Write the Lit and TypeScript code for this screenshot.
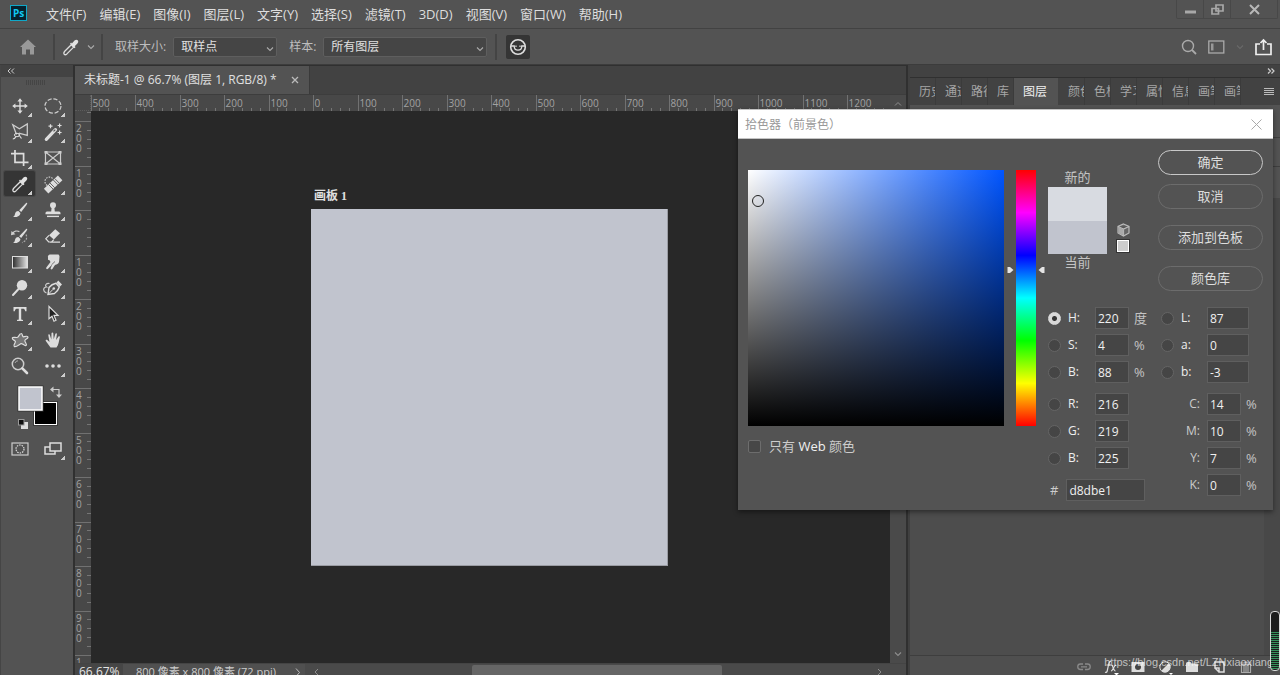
import { LitElement, html, svg, css } from "lit";
import { customElement, property } from "lit/decorators.js";
import { classMap } from "lit/directives/class-map.js";
import { styleMap } from "lit/directives/style-map.js";

const FONT = css`"Open Sans", "Noto Sans", "Noto Sans CJK SC", sans-serif`;

const reset = css`
  * { box-sizing: border-box; }
  :host { font-family: ${FONT}; font-size: 12px; line-height: 16px; color: #d6d6d6; }
  button { font: inherit; color: inherit; background: none; border: 0; padding: 0; margin: 0; }
  svg { display: block; }
`;

const chevron = svg`<path d="M1 1.5 4 4.5 7 1.5" fill="none" stroke="currentColor" stroke-width="1.1"/>`;

/* ---------- tool glyphs, drawn in a 20 x 20 box ---------- */
const dropper = svg`
  <path d="M3.2 17.3c-.8-.8-.3-2 .3-2.8l6.8-6.8 2.4 2.4-6.8 6.8c-.8.7-2 1.1-2.7.4z" fill="none" stroke="#ddd" stroke-width="1.3"/>
  <path d="M9 6.7 13.5 11.2 14.6 10.1 13.7 9.2 16.4 6.6C17.6 5.3 17.4 4 16.7 3.3 16 2.6 14.7 2.5 13.5 3.6L10.9 6.4 10.1 5.6Z" fill="#e2e2e2"/>`;
const brush = svg`
  <path d="M17 2.8C17.6 3.2 17 4.2 16.5 5L11.2 12 9.2 10.2 15.4 3.7C16 3.1 16.6 2.5 17 2.8Z" fill="#ddd"/>
  <path d="M8.4 11 10.4 12.9C10.3 15.8 7 17.5 3 17 4.8 16.2 4.6 14.8 5.2 13.2 5.8 11.7 7 10.9 8.4 11Z" fill="#ddd"/>`;

const tools: { name: string; icon: unknown; menu?: boolean; active?: boolean }[] = [
  { name: "移动工具", icon: svg`
    <path d="M10 4v12M4 10h12" stroke="#ddd" stroke-width="1.4"/>
    <path d="M10 2.2 12.6 5.4H7.4ZM10 17.8 12.6 14.6H7.4ZM2.2 10 5.4 7.4v5.2ZM17.8 10 14.6 7.4v5.2Z" fill="#ddd"/>` },
  { name: "椭圆选框工具", icon: svg`<ellipse cx="10" cy="10" rx="8" ry="7.2" fill="none" stroke="#ccc" stroke-width="1.2" stroke-dasharray="4.2 1.8"/>` },
  { name: "多边形套索工具", icon: svg`
    <path d="M6.5 12.5 2.8 2.8 9.4 6.8 17.3 2V13.4L8.8 11.2" fill="none" stroke="#ccc" stroke-width="1.3"/>
    <ellipse cx="7" cy="13" rx="2.6" ry="1.7" fill="none" stroke="#ddd"/>
    <path d="M6 14.5C5.4 15.8 4.3 17 2.8 17M8.6 12.5 11.5 16.5" fill="none" stroke="#ddd" stroke-width="1.2"/>` },
  { name: "魔棒工具", icon: svg`
    <path d="M3.3 17.3 12.5 7.7" stroke="#ddd" stroke-width="3.2" stroke-linecap="round"/>
    <path d="M10.5 9.4 12.3 7.6" stroke="#555" stroke-width="1.2"/>
    <path d="M7.5 2.2v4M5.5 4.2h4M16.6 1.5v4M14.6 3.5h4M16.6 8.5v4M14.6 10.5h4" stroke="#ddd" stroke-width="1.2"/>` },
  { name: "裁剪工具", icon: svg`<path d="M1 5.6H13.6V15M5 2V14.4H18.5M13.6 15V18" fill="none" stroke="#ddd" stroke-width="1.7"/>` },
  { name: "图框工具", menu: false, icon: svg`
    <path d="M2.5 4H17.5V16H2.5ZM2.5 4 17.5 16M17.5 4 2.5 16" fill="none" stroke="#ccc" stroke-width="1.2"/>
    <path d="M1.5 3h3v2.5h-3zM15.5 3h3v2.5h-3zM1.5 14.5h3V17h-3zM15.5 14.5h3V17h-3z" fill="#ccc"/>` },
  { name: "吸管工具", active: true, icon: dropper },
  { name: "污点修复画笔工具", icon: svg`
    <path d="M9.5 4.5C7 1.500 2 3.500 2 7.500 2 9.500 3 11 4.500 11.500" fill="none" stroke="#ccc" stroke-width="1.2" stroke-dasharray="1.5 1.2"/>
    <path d="M5.500 14.800 14.800 6" stroke="#ddd" stroke-width="6.500" stroke-linecap="square"/>
    <path d="M5.500 10.500 10.300 15.300M7 9 11.800 13.800M10.300 6 15 10.800M11.800 4.600 16.500 9.400" stroke="#555" stroke-width=".9"/>` },
  { name: "画笔工具", icon: brush },
  { name: "仿制图章工具", icon: svg`
    <circle cx="10" cy="5.3" r="3" fill="#ddd"/><path d="M8.8 6h2.4l.6 5.5H16a1.5 1.5 0 0 1 1.5 1.5v1.3h-15V13A1.5 1.5 0 0 1 4 11.5h4.2Z" fill="#ddd"/>
    <path d="M4 16.4h12" stroke="#ddd" stroke-width="1.4"/>` },
  { name: "历史记录画笔工具", icon: svg`${brush}
    <path d="M2.5 7.6C4 5.2 7 4.4 9.4 5.6" fill="none" stroke="#ccc" stroke-width="1.3"/><path d="M1 9.3 1.4 5 5.5 8.3Z" fill="#ccc"/>
    <path d="M16 8.5C17.5 12 16.5 15 12 16.6" fill="none" stroke="#aaa" stroke-width="1.2" stroke-dasharray="2 1.3"/>` },
  { name: "橡皮擦工具", icon: svg`
    <path d="M12.3 3.2 17 7.3 10.8 13.6 6 9.3Z" fill="#ddd"/>
    <path d="M6 9.3 2.8 12.7 5.7 16H8.6L10.8 13.6M7 16.2H17" fill="none" stroke="#ddd" stroke-width="1.2"/>` },
  { name: "渐变工具", icon: svg`
    <defs><linearGradient id="gr"><stop offset="0" stop-color="#2c2c2c"/><stop offset="1" stop-color="#e4e4e4"/></linearGradient></defs>
    <rect x="2.5" y="4.5" width="15" height="11.5" fill="url(#gr)" stroke="#ddd"/>` },
  { name: "涂抹工具", icon: svg`
    <path d="M5 5.500C4.500 4 5.500 2.600 7.500 2.600H14.500C16.300 2.600 16.800 4 16.400 6 16 8 16.600 9.500 15.400 11.200 14.300 12.700 12.500 12 11.600 13.400L9.400 17C8.600 18 7.200 17.200 7.700 16L9.300 12.500 5 16.800C3.800 17.800 2.500 16.500 3.500 15.200L7.500 10 6.500 8.200 5 7.800Z" fill="#ddd"/>
    <path d="M8.500 12.800 12 9.500" stroke="#777"/>` },
  { name: "减淡工具", icon: svg`<circle cx="12" cy="7.2" r="5.2" fill="#ddd"/><path d="M8.5 11 3 17" stroke="#ddd" stroke-width="2" stroke-linecap="round"/>` },
  { name: "钢笔工具", icon: svg`
    <path d="M5 16.5 6 9.500C8 7 10.5 5.8 13 5.3L16.3 9C15.5 11.5 13.8 14 11.5 15.500Z" fill="none" stroke="#ddd" stroke-width="1.4"/>
    <path d="M5 16.5 10 11.3" stroke="#ddd"/><circle cx="10.8" cy="10.5" r="1.3" fill="#ddd"/>
    <path d="M13.5 4.8 15.2 2.6 19 6.5 17 8.6Z" fill="#ddd"/><path d="M3.5 15C-1 13 .5 9 3.5 9 1.5 7.5 3 5 6.5 5.5" fill="none" stroke="#ccc" stroke-width="1.2"/>` },
  { name: "横排文字工具", icon: svg`<path d="M3.500 3H16.500V7.200H15.200C14.900 5.400 14.200 4.800 12.500 4.800H11.200V14.800C11.200 15.700 11.700 15.900 13 16V17H7V16C8.300 15.900 8.800 15.700 8.800 14.800V4.800H7.500C5.800 4.800 5.100 5.400 4.800 7.200H3.500Z" fill="#ddd"/>` },
  { name: "路径选择工具", icon: svg`<path d="M6 2.500V14.8L9 12.2 11 17.2 13 16.3 11 11.4H15Z" fill="#222" stroke="#ddd" stroke-width="1.2"/>` },
  { name: "自定形状工具", icon: svg`<path d="M11 3.500C12.8 3.200 12 7 13.500 6.800 15 6.500 18 5.500 18 7.200 18 9 14.500 9 14.800 10.800 15 12.500 17.500 14.500 16 15.500 14.500 16.400 12.500 13 11 13.600 9.500 14.200 6 17.500 4.200 16.400 2.700 15.300 5.800 12.800 5.400 11.500 5 10.200 1.800 9.700 2.300 8 2.800 6.500 6 8 7.500 7.300 9 6.500 9.500 3.700 11 3.500Z" fill="#777" stroke="#ddd" stroke-width="1.2"/>` },
  { name: "抓手工具", icon: svg`<path d="M7.500 17.500 2.800 10.900C2.200 9.800 3.500 9.200 4.300 10L6.500 12 5.300 5.300C5.200 4.100 6.600 3.900 6.900 5L8.300 9.500 8.500 3.300C8.600 2.100 10.200 2.100 10.300 3.300L10.700 9.300 12.300 3.900C12.700 2.800 14 3.200 13.900 4.300L13.100 10 15.300 6.700C16 5.800 17.200 6.500 16.800 7.500 16 10.200 15.800 14.700 13.500 17.500Z" fill="#ddd"/>` },
  { name: "缩放工具", menu: false, icon: svg`<circle cx="8" cy="8" r="5.700" fill="none" stroke="#ccc" stroke-width="1.5"/><path d="M5 7A3.200 3.200 0 0 1 8 4.800" fill="none" stroke="#aaa"/><path d="M12.300 12.300 17 17" stroke="#ddd" stroke-width="2.600" stroke-linecap="round"/>` },
  { name: "编辑工具栏", icon: svg`<circle cx="4" cy="10" r="1.800" fill="#ddd"/><circle cx="10" cy="10" r="1.800" fill="#ddd"/><circle cx="16" cy="10" r="1.800" fill="#ddd"/>` },
];

/* ---------- tool column ---------- */
@customElement("tool-bar")
export class ToolBar extends LitElement {
  static styles = [reset, css`
    :host { display: flex; flex-direction: column; background: #535353; border-left: 1px solid #454545; }
    .head { height: 12px; background: #434343; padding: 2px 6px; color: #ccc; }
    .grip { height: 5px; width: 20px; margin: 3px auto 0 25px; background: repeating-linear-gradient(90deg, #454545 0 1px, transparent 1px 2px); }
    .grid { display: grid; grid-template-columns: 33px 33px; grid-auto-rows: 26px; margin: 8px 0 0 3px; }
    .tool { display: grid; place-items: center; position: relative; height: 25px; width: 31px; border-radius: 2px; }
    .on { background: #353535; box-shadow: 0 0 0 1px #484848; }
    .corner { position: absolute; right: 3px; bottom: 1px; width: 4px; height: 4px; background: linear-gradient(135deg, transparent 50%, #ccc 50%); }
    .extra { margin: 6px 0 0 13px; }
    .modes { display: grid; grid-template-columns: 33px 33px; margin: 3px 0 0 3px; }
  `];
  render() {
    return html`
      <div class="head"><svg width="8" height="8" viewBox="0 0 8 8"><path d="M3.500 1.500 1 4 3.500 6.500M7 1.500 4.500 4 7 6.500" fill="none" stroke="currentColor"/></svg></div>
      <div class="grip"></div>
      <div class="grid">
        ${tools.map(t => html`<button class=${classMap({ tool: true, on: !!t.active })} aria-label=${t.name}>
          <svg width="20" height="20" viewBox="0 0 20 20">${t.icon}</svg>
          ${t.menu === false ? "" : html`<span class="corner"></span>`}</button>`)}
      </div>
      <button class="extra" aria-label="前景色和背景色">
        <svg width="48" height="48" viewBox="0 0 48 48">
          <rect x="19.500" y="16.500" width="24" height="24" fill="#000" stroke="#3a3a3a"/><rect x="20.500" y="17.500" width="22" height="22" fill="#000" stroke="#fff"/>
          <rect x="3.500" y=".5" width="26" height="26" fill="#333"/><rect x="5" y="2" width="23" height="23" fill="#c1c4ce" stroke="#fff" stroke-width="1.5"/>
          <path d="M39 4.500H45V10" fill="none" stroke="#ccc" stroke-width="1.2"/><path d="M36 4.500 39.500 1.500V7.500ZM45 13 42 9.500H48Z" fill="#ccc"/>
          <rect x="7" y="37" width="7" height="7" fill="#ddd"/><rect x="4.500" y="34.500" width="5.500" height="5.500" fill="#111" stroke="#999"/>
        </svg>
      </button>
      <div class="modes">
        <button class="tool" aria-label="以快速蒙版模式编辑"><svg width="20" height="20" viewBox="0 0 20 20">
          <rect x="2" y="4" width="16" height="12" fill="none" stroke="#ccc" stroke-width="1.2"/><circle cx="10" cy="10" r="4" fill="none" stroke="#ddd" stroke-width="1.2" stroke-dasharray="1.5 1"/></svg></button>
        <button class="tool" aria-label="更改屏幕模式"><svg width="20" height="20" viewBox="0 0 20 20">
          <path d="M7 4H18V12H7Z M7 8H2V15H12V12" fill="none" stroke="#ddd" stroke-width="1.5"/></svg><span class="corner"></span></button>
      </div>`;
  }
}

/* ---------- rulers ---------- */
@customElement("px-ruler")
export class PxRuler extends LitElement {
  @property({ type: Boolean, reflect: true }) vertical = false;
  @property({ type: Number }) origin = 0;
  @property({ type: Number }) extent = 0;
  private watcher = new ResizeObserver(([e]) => {
    this.extent = this.vertical ? e.contentRect.height : e.contentRect.width;
  });
  connectedCallback() { super.connectedCallback(); this.watcher.observe(this); }
  disconnectedCallback() { this.watcher.disconnect(); super.disconnectedCallback(); }
  static styles = css`
    :host { display: block; background: #484848; overflow: hidden; min-width: 0; min-height: 0; contain: size; }
    svg { display: block; width: 100%; height: 100%; }
    text { font: 10px ${FONT}; fill: #a2a2a2; }
    .major { stroke: #717171; }
    .minor { stroke: #757575; }
  `;
  render() {
    const step = 44.5;
    const out: unknown[] = [];
    const first = -Math.ceil(this.origin / step);
    const last = Math.floor((this.extent - this.origin) / step);
    for (let i = first; i <= last; i++) {
      const p = Math.round(this.origin + i * step) + 0.5;
      if (p >= 0) {
        const label = String(Math.abs(i * 100));
        if (this.vertical) {
          out.push(svg`<line class="major" x1="0" x2="16" y1=${p} y2=${p}/>`);
          [...label].forEach((c, k) => {
            const y = p + 10 + k * 10;
            if (y < this.extent + 8) out.push(svg`<text x="1" y=${y}>${c}</text>`);
          });
        } else {
          out.push(svg`<line class="major" x1=${p} x2=${p} y1="0" y2="16"/>`);
          if (p + 24 < this.extent) out.push(svg`<text x=${p + 1} y="12">${label}</text>`);
        }
      }
      for (let m = 1; m < 5; m++) {
        const q = Math.round(this.origin + (i + m / 5) * step) + 0.5;
        out.push(this.vertical
          ? svg`<line class="minor" x1="12" x2="16" y1=${q} y2=${q}/>`
          : svg`<line class="minor" x1=${q} x2=${q} y1="13" y2="16"/>`);
      }
    }
    return html`<svg aria-hidden="true">${out}</svg>`;
  }
}

/* ---------- document window ---------- */
@customElement("document-view")
export class DocumentView extends LitElement {
  static styles = [reset, css`
    :host { display: flex; flex-direction: column; min-width: 0; background: #424242; border: 1px solid #303030; border-width: 1px 2px 0 2px; }
    .tabs { display: flex; height: 29px; border-bottom: 1px solid #3d3d3d; }
    .tab { display: flex; align-items: center; gap: 14px; padding: 0 10px 0 9px; background: #535353; border-right: 1px solid #3a3a3a; color: #e0e0e0; }
    .work { flex: 1; min-height: 0; display: grid; grid-template: 16px minmax(0, 1fr) / 16px minmax(0, 1fr) 16px; }
    .cross { background: #484848; border-right: 1px dotted #5c5c5c; border-bottom: 1px dotted #5c5c5c; }
    .canvas { position: relative; background: #282828; overflow: hidden; }
    .board { position: absolute; left: 220px; top: 98px; width: 357px; height: 357px; background: #c1c4ce; border: 1px solid #9a9ca3; border-width: 0 1px 1px 0; }
    .name { position: absolute; left: 223px; top: 77px; font: bold 12px/16px "Liberation Serif", "Noto Sans CJK SC", serif; color: #e0e0e0; }
    .vscroll { grid-area: 1 / 3 / 3 / 4; background: #4a4a4a; display: flex; flex-direction: column; justify-content: space-between; align-items: center; padding: 6px 0; color: #8d8d8d; }
    .status { display: flex; height: 12px; overflow: hidden; background: #4a4a4a; border-top: 1px solid #444; color: #ccc; white-space: nowrap; }
    .zoom { width: 48px; padding-left: 4px; background: #464646; color: #e4e4e4; }
    .info { display: flex; justify-content: space-between; width: 182px; padding: 0 4px 0 13px; background: #505050; font-size: 11px; }
    .hscroll { flex: 1; display: flex; padding: 0 24px 0 9px; color: #8d8d8d; }
    .track { flex: 1; display: grid; grid-template-columns: 153fr 250fr 155fr; padding-top: 1px; }
    .thumb { grid-column: 2; background: #666; height: 16px; border-radius: 2px; }
    .arrow { margin-top: 4px; }
  `];
  render() {
    return html`
      <div class="tabs"><div class="tab"><span>未标题-1 @ 66.7% (图层 1, RGB/8) *</span>
        <button aria-label="关闭文档"><svg width="8" height="8" viewBox="0 0 8 8"><path d="M1 1 7 7M7 1 1 7" stroke="#bbb" stroke-width="1.3"/></svg></button></div></div>
      <div class="work">
        <div class="cross"></div>
        <px-ruler .origin=${222}></px-ruler>
        <px-ruler vertical .origin=${99}></px-ruler>
        <div class="canvas"><div class="name">画板 1</div><div class="board"></div></div>
        <div class="vscroll">
          <svg width="8" height="6" viewBox="0 0 8 6"><path d="M1 4.500 4 1.500 7 4.500" fill="none" stroke="currentColor"/></svg>
          <svg width="8" height="6" viewBox="0 0 8 6">${chevron}</svg>
        </div>
      </div>
      <div class="status">
        <div class="zoom">66.67%</div>
        <div class="info"><span>800 像素 x 800 像素 (72 ppi)</span><svg class="arrow" width="6" height="9" viewBox="0 0 6 9"><path d="M1 .5 4.500 4.500 1 8.500" fill="none" stroke="#bbb"/></svg></div>
        <div class="hscroll"><svg class="arrow" width="5" height="8" viewBox="0 0 5 8"><path d="M4 1 1 4 4 7" fill="none" stroke="currentColor"/></svg>
          <div class="track"><div class="thumb"></div></div>
          <svg class="arrow" width="5" height="8" viewBox="0 0 5 8"><path d="M1 1 4 4 1 7" fill="none" stroke="currentColor"/></svg></div>
      </div>`;
  }
}

/* ---------- panel dock ---------- */
const panelTabs = ["历史", "通道", "路径", "库", "图层", "颜色", "色板", "学习", "属性", "信息", "画笔", "画笔"];
const layerActions: [string, unknown][] = [
  ["链接图层", svg`<path d="M7 5H4.500A2.500 2.500 0 0 0 4.500 10.500H7M9 5h2.500a2.500 2.500 0 0 1 0 5.500H9M5 7.800h6" fill="none" stroke="#8a8a8a" stroke-width="1.3"/>`],
  ["图层样式", svg`<path d="M8 2.500C6.500 2.200 6 3.500 5.700 5L4.200 12C4 13 3.300 13.600 2 13.200M3.500 6H8M8.500 6C10 6 10.300 12 12.500 12M13 6C11 6 10 12 8 12" fill="none" stroke="#ddd" stroke-width="1.2"/><path d="M11 14h5l-2.500 2.500z" fill="#fff"/>`],
  ["添加蒙版", svg`<path d="M1.500 3H14.500V13H1.500Z" fill="#ddd"/><circle cx="8" cy="8" r="3" fill="#444"/>`],
  ["调整图层", svg`<circle cx="8" cy="8" r="5.200" fill="none" stroke="#ddd"/><path d="M11.700 4.300A5.200 5.200 0 0 1 4.300 11.700Z" fill="#ddd"/><path d="M12 14h4l-2 2z" fill="#fff"/>`],
  ["新建组", svg`<path d="M2 4.500Q2 3 3.500 3H6.500L7.500 4.500H13Q14 4.500 14 5.500V13H2Z" fill="#ddd"/>`],
  ["新建图层", svg`<path d="M4 3H13V13H8V9H4ZM8 13 4 9" fill="none" stroke="#ddd" stroke-width="1.5"/>`],
  ["删除图层", svg`<path d="M3.500 5.500H12.500V13.500H3.500ZM2.500 4H13.500M6.500 3H9.500M6 6V13M8 6V13M10 6V13" fill="none" stroke="#aaa" stroke-width="1.2"/>`],
];

@customElement("panel-dock")
export class PanelDock extends LitElement {
  static styles = [reset, css`
    :host { display: flex; flex-direction: column; background: #484848; border-left: 2px solid #404040; min-width: 0; }
    .head { height: 13px; background: #424242; border-bottom: 1px solid #303030; display: flex; justify-content: flex-end; padding: 2px 5px; color: #ccc; }
    .tabs { display: flex; height: 27px; background: #424242; color: #a6a6a6; }
    .tab { flex: none; width: 26px; padding-left: 9px; overflow: hidden; white-space: nowrap; text-align: left; border-right: 1px solid #3b3b3b; }
    .on { width: 44px; background: #535353; color: #f0f0f0; margin-right: 1px; border-right: 0; }
    .menu { margin: 0 5px 0 auto; }
    .rows { height: 93px; background: linear-gradient(#3f3f3f, #3f3f3f) 0 32px / 100% 1px no-repeat, linear-gradient(#3f3f3f, #3f3f3f) 0 61px / 100% 1px no-repeat, #535353; }
    .list { flex: 1; background: #4d4d4d; margin-right: 16px; }
    .foot { height: 20px; display: flex; gap: 11px; justify-content: flex-end; padding: 3px 26px 0 0; background: #4f4f4f; border-top: 1px solid #3e3e3e; overflow: hidden; }
  `];
  render() {
    return html`
      <div class="head"><svg width="8" height="8" viewBox="0 0 8 8"><path d="M1 1.500 3.500 4 1 6.500M4.500 1.500 7 4 4.500 6.500" fill="none" stroke="currentColor" stroke-width="1.2"/></svg></div>
      <div class="tabs">
        ${panelTabs.map(t => html`<button class=${classMap({ tab: true, on: t === "图层" })}>${t}</button>`)}
        <button class="menu" aria-label="面板菜单"><svg width="12" height="10" viewBox="0 0 12 10"><path d="M1 1.500H11M1 3.500H11M1 5.500H11M1 7.500H11" stroke="#bbb"/></svg></button>
      </div>
      <div class="rows"></div>
      <div class="list"></div>
      <div class="foot">${layerActions.map(([n, i]) => html`<button aria-label=${n}><svg width="16" height="16" viewBox="0 0 16 16">${i}</svg></button>`)}</div>`;
  }
}

/* ---------- colour picker ---------- */
interface Channel { id: string; label: string; value: string; unit?: string; radio?: boolean; on?: boolean; wide?: boolean }
const leftChannels: Channel[][] = [
  [{ id: "h", label: "H:", value: "220", unit: "度", radio: true, on: true }, { id: "s", label: "S:", value: "4", unit: "%", radio: true }, { id: "v", label: "B:", value: "88", unit: "%", radio: true }],
  [{ id: "r", label: "R:", value: "216", radio: true }, { id: "g", label: "G:", value: "219", radio: true }, { id: "bl", label: "B:", value: "225", radio: true }],
];
const rightChannels: Channel[][] = [
  [{ id: "l", label: "L:", value: "87", radio: true, wide: true }, { id: "a", label: "a:", value: "0", radio: true, wide: true }, { id: "b", label: "b:", value: "-3", radio: true, wide: true }],
  [{ id: "c", label: "C:", value: "14", unit: "%" }, { id: "m", label: "M:", value: "10", unit: "%" }, { id: "y", label: "Y:", value: "7", unit: "%" }, { id: "k", label: "K:", value: "0", unit: "%" }],
];

@customElement("color-picker")
export class ColorPicker extends LitElement {
  @property({ type: Number }) hue = 220;
  static styles = [reset, css`
    :host { display: block; width: 535px; background: #535353; box-shadow: 0 2px 5px rgba(0,0,0,.45); }
    .title { display: flex; align-items: center; justify-content: space-between; height: 30px; padding: 1px 10px 0 7px; background: #fff; border: 1px solid #c4c4c4; border-width: 1px 0; color: #999; }
    .body { display: flex; padding: 0 10px 9px; }
    .field { position: relative; width: 256px; height: 256px; margin-top: 31px; }
    .ring { position: absolute; width: 12px; height: 12px; border: 1px solid #222; border-radius: 50%; transform: translate(-50%, -50%); }
    .web { display: flex; align-items: center; gap: 8px; margin-top: 12px; font-size: 13px; color: #ccc; }
    .web b { font-weight: 500; color: #f0f0f0; }
    input { font: inherit; margin: 0; }
    input[type=checkbox], input[type=radio] { appearance: none; width: 13px; height: 13px; background: #474747; border: 1px solid #6d6d6d; border-radius: 2px; }
    input[type=radio] { border-radius: 50%; background: #454545; border-color: #656565; }
    input[type=radio]:checked { background: radial-gradient(circle, #333 0 2px, #d8d8d8 3px); border-color: #d8d8d8; }
    .hue { position: relative; width: 38px; height: 256px; margin: 31px 3px 0; padding: 0 9px; }
    .strip { height: 100%; background: linear-gradient(#f00, #f0f, #00f, #0ff, #0f0, #ff0, #f00); }
    .mark { position: absolute; left: 0; right: 0; display: flex; justify-content: space-between; transform: translateY(-50%); }
    .side { flex: 1; }
    .top { display: flex; justify-content: space-between; height: 168px; }
    .compare { display: flex; gap: 9px; align-items: flex-end; height: 115px; color: #c4c4c4; }
    .pair { display: grid; width: 59px; text-align: center; grid-template-rows: 18px 34px 33px; font-size: 13px; height: 85px; }
    .new { background: #d8dbe1; }
    .cur { background: #c1c4ce; }
    .warn { display: grid; gap: 2px; justify-items: center; padding-bottom: 1px; }
    .actions { display: flex; flex-direction: column; gap: 9px; width: 105px; padding-top: 11px; }
    .actions button { height: 25px; padding-bottom: 1px; border: 1px solid #6c6c6c; border-radius: 13px; color: #dedede; font-size: 13px; }
    .actions .ok { border-color: #c8c8c8; }
    .actions .far { margin-top: 7px; }
    .values { display: grid; grid-template-columns: 113px 1fr; align-items: start; }
    .col { display: grid; gap: 10px; }
    .group { display: grid; gap: 5px; }
    .row { display: grid; grid-template-columns: 20px 27px auto 1fr; align-items: center; height: 22px; }
    .right .row { grid-template-columns: 20px 26px auto 1fr; }
    .row .plain { grid-column: 1 / 3; text-align: right; padding-right: 7px; color: #ccc; }
    label { color: #eee; }
    .unit { padding-left: 5px; font-size: 13px; color: #c4c4c4; }
    input.num { width: 34px; height: 22px; padding: 0 2px; background: #454545; border: 1px solid #5f5f5f; color: #f0f0f0; border-radius: 0; }
    input.wide { width: 42px; }
    .hex { display: flex; align-items: center; gap: 8px; padding-left: 2px; }
    .hex label { color: #ccc; font-size: 13px; }
    .hex .num { width: 79px; }
  `];
  private row(c: Channel) {
    return html`<div class="row">
      ${c.radio ? html`<input type="radio" name="axis" aria-label=${c.label} ?checked=${!!c.on}>` : ""}
      <label class=${classMap({ plain: !c.radio })} for=${c.id}>${c.label}</label>
      <input id=${c.id} class=${classMap({ num: true, wide: !!c.wide })} .value=${c.value}>
      ${c.unit ? html`<span class="unit">${c.unit}</span>` : ""}
    </div>`;
  }
  render() {
    const field = { background: `linear-gradient(transparent, #000), linear-gradient(90deg, #fff, hsl(${this.hue} 100% 50%))` };
    return html`
      <div class="title"><span>拾色器（前景色）</span><button aria-label="关闭"><svg width="13" height="13" viewBox="0 0 13 13"><path d="M1.500 1.500 11.500 11.500M11.500 1.500 1.500 11.500" stroke="#aaa"/></svg></button></div>
      <div class="body">
        <div>
          <div class="field" style=${styleMap(field)}><div class="ring" style=${styleMap({ left: "4%", top: "12%" })}></div></div>
          <label class="web"><input type="checkbox"><span>只有 <b>Web</b> 颜色</span></label>
        </div>
        <div class="hue"><div class="strip"></div>
          <div class="mark" style=${styleMap({ top: `${(1 - this.hue / 360) * 100}%` })}>
            <svg width="7" height="8" viewBox="0 0 7 8"><path d="M.500 1H3L6.500 4 3 7H.500Z" fill="#e4e4e4"/></svg>
            <svg width="7" height="8" viewBox="0 0 7 8"><path d="M6.500 1H4L.500 4 4 7H6.500Z" fill="#e4e4e4"/></svg>
          </div></div>
        <div class="side">
          <div class="top">
            <div class="compare">
              <div class="pair"><span>新的</span><div class="new"></div><div class="cur"></div><span>当前</span></div>
              <div class="warn">
                <svg width="13" height="14" viewBox="0 0 13 14"><path d="M6.500 1 12 3.500V10L6.500 13 1 10V3.500ZM1 3.500 6.500 6 12 3.500M6.500 6V13" fill="#666" stroke="#bbb" stroke-width="1.2"/><path d="M1.500 4 6.500 6.500V12.500L1.500 10Z" fill="#aaa"/></svg>
                <svg width="14" height="14" viewBox="0 0 14 14"><rect width="14" height="14" fill="#333"/><rect x="1.500" y="1.500" width="11" height="11" fill="#ccc" stroke="#fff"/></svg>
              </div>
            </div>
            <div class="actions"><button class="ok">确定</button><button>取消</button><button class="far">添加到色板</button><button class="far">颜色库</button></div>
          </div>
          <div class="values">
            <div class="col">${leftChannels.map(g => html`<div class="group">${g.map(c => this.row(c))}</div>`)}
              <div class="hex"><label for="hex">#</label><input id="hex" class="num" .value=${"d8dbe1"}></div></div>
            <div class="col right">${rightChannels.map(g => html`<div class="group">${g.map(c => this.row(c))}</div>`)}</div>
          </div>
        </div>
      </div>`;
  }
}

/* ---------- application frame ---------- */
const menus = ["文件(F)", "编辑(E)", "图像(I)", "图层(L)", "文字(Y)", "选择(S)", "滤镜(T)", "3D(D)", "视图(V)", "窗口(W)", "帮助(H)"];

@customElement("app-root")
export class AppRoot extends LitElement {
  static styles = [reset, css`
    :host { display: flex; flex-direction: column; height: 100vh; position: relative; overflow: hidden; background: #535353; }
    .menubar { display: flex; height: 29px; padding-left: 10px; border-bottom: 1px solid #424242; }
    .logo { margin: 5px 19px 0 0; }
    .logo text { font: bold 10px ${FONT}; fill: #10c8f4; }
    .menu { display: flex; gap: 13px; height: 27px; align-items: center; flex: 1; font-size: 13px; color: #dedede; white-space: nowrap; }
    .win { display: flex; height: 19px; margin-right: 2px; border: 1px solid #484848; border-top: 0; border-radius: 0 0 2px 2px; }
    .win button { display: grid; place-items: center; width: 27px; border-right: 1px solid #484848; }
    .win button:last-child { width: 46px; border: 0; }
    .options { display: flex; align-items: center; height: 36px; border-bottom: 1px solid #3c3c3c; color: #bdbdbd; }
    .home { margin-left: 19px; }
    .sep { width: 2px; height: 26px; background: #444; }
    .home + .sep { margin: 0 6px 0 16px; }
    .pick { display: flex; align-items: center; gap: 6px; margin-right: 6px; color: #aaa; }
    .opt { display: flex; align-items: center; gap: 7px; margin-left: 12px; }
    .box { position: relative; width: 104px; color: #aaa; }
    .box.big { width: 164px; }
    .box svg { position: absolute; right: 3px; top: 9px; pointer-events: none; }
    select { appearance: none; display: block; width: 100%; height: 20px; padding: 0 7px; font: inherit; color: #e0e0e0; background: #454545; border: 1px solid #5e5e5e; border-radius: 2px; }
    .last { margin: 0 9px 0 8px; }
    .toggle { display: grid; place-items: center; width: 24px; height: 24px; border-radius: 2px; background: #353535; }
    .tail { display: flex; align-items: center; gap: 11px; margin: 0 8px 0 auto; }
    .main { flex: 1; min-height: 0; display: grid; grid-template-columns: 73px minmax(0, 1fr) 372px; }
    .dialog { position: absolute; right: 7px; top: 109px; }
    .meter { position: absolute; right: 0; bottom: 4px; width: 10px; height: 60px; border: 1px solid #d8d8d8; border-radius: 4px; background: repeating-linear-gradient(#35915b 0 1px, #1c1c1c 1px 2px) 0 20px / 100% 100% no-repeat, #1c1c1c; }
    .mark { position: absolute; right: 7px; bottom: 5px; font: 11px/16px "Liberation Sans", sans-serif; color: rgba(255,255,255,.65); text-decoration: none; }
  `];
  render() {
    return html`
      <header class="menubar">
        <svg class="logo" width="17" height="16" viewBox="0 0 17 16" role="img"><rect x=".5" y=".5" width="16" height="15" fill="#06222f" stroke="#10a8c8"/><text x="3" y="12">Ps</text></svg>
        <nav class="menu">${menus.map(m => html`<button>${m}</button>`)}</nav>
        <div class="win">
          <button aria-label="最小化"><svg width="11" height="11" viewBox="0 0 11 11"><path d="M0 8H11" stroke="#a8a8a8" stroke-width="3"/></svg></button>
          <button aria-label="还原"><svg width="13" height="11" viewBox="0 0 13 11"><path d="M5 1H12V7H5ZM1 4.500H7.500V10H1Z" fill="none" stroke="#a8a8a8" stroke-width="1.7"/></svg></button>
          <button aria-label="退出"><svg width="11" height="11" viewBox="0 0 11 11"><path d="M1 1 10 10M10 1 1 10" stroke="#b8b8b8" stroke-width="2"/></svg></button>
        </div>
      </header>
      <div class="options">
        <button class="home" aria-label="主页"><svg width="18" height="18" viewBox="0 0 18 18"><path d="M9 1.500 17 9H15V16.500H11V11.500H7V16.500H3V9H1Z" fill="#999"/></svg></button>
        <span class="sep"></span>
        <button class="pick" aria-label="吸管预设"><svg width="20" height="20" viewBox="0 0 20 20">${dropper}</svg><svg width="8" height="6" viewBox="0 0 8 6">${chevron}</svg></button>
        <span class="sep"></span>
        <label class="opt">取样大小:<span class="box"><select><option>取样点</option></select><svg width="8" height="6" viewBox="0 0 8 6">${chevron}</svg></span></label>
        <label class="opt">样本:<span class="box big"><select><option>所有图层</option></select><svg width="8" height="6" viewBox="0 0 8 6">${chevron}</svg></span></label>
        <span class="sep last"></span>
        <button class="toggle" aria-label="显示取样环"><svg width="18" height="18" viewBox="0 0 18 18"><circle cx="9" cy="9" r="7.300" fill="none" stroke="#ddd" stroke-width="1.6"/><path d="M2 8H5.200C5.200 10.800 6.800 12.200 9 12.200S12.800 10.800 12.800 8H16" fill="none" stroke="#ddd" stroke-width="1.3"/><path d="M7 7.500v1.500M11 7.500v1.500" stroke="#ddd" stroke-width="1.2"/></svg></button>
        <div class="tail">
          <button aria-label="搜索"><svg width="16" height="16" viewBox="0 0 16 16"><circle cx="7" cy="7" r="5.500" fill="none" stroke="#aaa" stroke-width="1.4"/><path d="M11 11 15 15" stroke="#aaa" stroke-width="1.8"/></svg></button>
          <button aria-label="选择工作区"><svg width="17" height="14" viewBox="0 0 17 14"><rect x=".8" y="1" width="15" height="12" fill="none" stroke="#aaa" stroke-width="1.3"/><path d="M3 3.500h2.500v7H3z" fill="#999"/></svg></button>
          <svg width="8" height="6" viewBox="0 0 8 6" color="#696969">${chevron}</svg>
          <button aria-label="共享"><svg width="17" height="18" viewBox="0 0 17 18"><path d="M5 6H1V16.500H16V6H12M8.500 12V3M5.500 5 8.500 2 11.500 5" fill="none" stroke="#eee" stroke-width="1.7"/></svg></button>
        </div>
      </div>
      <main class="main"><tool-bar></tool-bar><document-view></document-view><panel-dock></panel-dock></main>
      <color-picker class="dialog" role="dialog" aria-label="拾色器"></color-picker>
      <a class="mark" href="#">https://blog.csdn.net/LZNxiaoxiang</a>
      <div class="meter"></div>`;
  }
}
